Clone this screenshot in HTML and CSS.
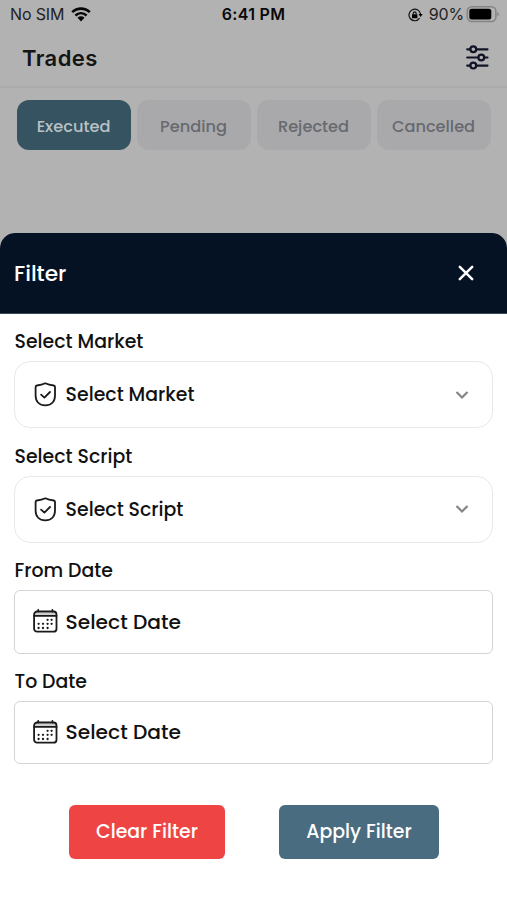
FILE: index.html
```html
<!DOCTYPE html>
<html lang="en">
<head>
<meta charset="utf-8">
<title>Trades</title>
<link rel="stylesheet" href="styles.css">
</head>
<body>
<svg width="0" height="0" class="defs">
  <symbol id="shield" viewBox="0 0 26 25"><path d="M13.3 1.3C10.8 2.5 7.6 3.2 4.9 3.5Q3.6 3.7 3.6 5V13.5C3.6 19.5 7.3 23.4 13.3 23.4S23 19.5 23 13.5V5Q23 3.7 21.7 3.5C19 3.2 15.8 2.5 13.3 1.3Z"/><path d="M9.1 12.6l3.3 3 5.6-5.6"/></symbol>
  <symbol id="chevron" viewBox="0 0 14 10"><path d="M1.5 2l5.5 5.5L12.5 2"/></symbol>
  <symbol id="calendar" viewBox="0 0 26 25"><path class="band" d="M2.5 3.4h22v3.2h-22z"/><rect x="2.1" y="2.5" width="22.4" height="20.2" rx="3"/><path d="M2.1 6.9h22.4M6.2 1v1.6M20.4 1v1.6"/><path class="dots" d="M15.6 10.8h.01M19.6 10.8h.01M6.6 14.8h.01M11 14.8h.01M15.6 14.8h.01M19.6 14.8h.01M6.6 19h.01M11 19h.01M15.6 19h.01"/></symbol>
</svg>
<main class="screen">
  <div class="status">
    <div class="carrier"><span>No SIM</span>
      <svg width="20" height="15" viewBox="0 0 20 15"><path class="arc" d="M1.2 5.1C6.2.4 13.8.4 18.8 5.1M4.4 8.5c3.3-3 7.9-3 11.2 0"/><path d="M6.5 10.7c2-1.8 5-1.8 7 0L10 14.4Z"/></svg>
    </div>
    <div class="time">6:41 PM</div>
    <div class="power">
      <svg class="lock" width="15" height="14" viewBox="0 0 15 14"><path class="ring" d="M11.6 10.2A5.8 5.8 0 1 1 12.5 6"/><path d="M10.5 6h4.2l-2.1 3zM4 6.2h5.4v4H4z"/><path class="ring" d="M5.3 6.3V5.2a1.4 1.4 0 0 1 2.8 0v1.1"/></svg>
      <span>90%</span>
      <svg width="33" height="17" viewBox="0 0 33 17"><rect class="case" x="1.3" y=".8" width="28.6" height="14.8" rx="4.5"/><rect x="3.3" y="2.8" width="22" height="10.8" rx="2.5"/><path class="tip" d="M31.4 6v4.4q1.5-.6 1.5-2.2T31.4 6Z"/></svg>
    </div>
  </div>
  <header class="topbar">
    <h1>Trades</h1>
    <svg class="sliders" width="23" height="25" viewBox="0 0 23 25"><path d="M1.2 4.3h2.9M10.5 4.3H21.5M1.2 12.5h10.5M18.5 12.5h3M1.2 20.6h2.9M10.5 20.6H21.5"/><circle cx="7.3" cy="4.3" r="2.9"/><circle cx="15.3" cy="12.5" r="2.9"/><circle cx="7.3" cy="20.6" r="2.9"/></svg>
  </header>
  <nav class="tabs">
    <span class="tab active">Executed</span><span class="tab">Pending</span><span class="tab">Rejected</span><span class="tab">Cancelled</span>
  </nav>
  <section class="sheet">
    <div class="sheet-head"><h2>Filter</h2>
      <svg class="close" width="16" height="16" viewBox="0 0 16 16"><path d="M1.8 1.8l12.4 12.4M14.2 1.8L1.8 14.2"/></svg>
    </div>
    <div class="form">
      <div class="field"><label>Select Market</label>
        <div class="box select"><svg class="icon"><use href="#shield"/></svg><span>Select Market</span><svg class="chevron"><use href="#chevron"/></svg></div></div>
      <div class="field"><label>Select Script</label>
        <div class="box select"><svg class="icon"><use href="#shield"/></svg><span>Select Script</span><svg class="chevron"><use href="#chevron"/></svg></div></div>
      <div class="field date"><label>From Date</label>
        <div class="box"><svg class="icon"><use href="#calendar"/></svg><span>Select Date</span></div></div>
      <div class="field date"><label>To Date</label>
        <div class="box"><svg class="icon"><use href="#calendar"/></svg><span>Select Date</span></div></div>
      <div class="actions"><button class="clear">Clear Filter</button><button class="apply">Apply Filter</button></div>
    </div>
  </section>
</main>
</body>
</html>
```
FILE: styles.css
```css
* { box-sizing: border-box; }
body { margin: 0; font-family: Poppins, Inter, "Liberation Sans", sans-serif; font-weight: 500; color: #111; }
h1, h2 { margin: 0; }
.defs { position: absolute; }
.screen { height: 900px; display: flex; flex-direction: column; background: #b2b2b3; overflow: hidden; }
.status { height: 30px; display: grid; grid-template-columns: 1fr auto 1fr; align-items: center; padding: 0 8px 1px 10px; font: 400 16px/29px Inter, sans-serif; color: #222; }
.carrier, .power { display: flex; align-items: center; }
.carrier { gap: 7px; letter-spacing: -.15px; }
.carrier svg { fill: #050505; }
.arc { fill: none; stroke: #050505; stroke-width: 2.6; }
.time { font-weight: 600; color: #080808; letter-spacing: .3px; margin-right: 2px; }
.power { justify-content: flex-end; }
.power .lock { margin-right: 6px; }
.power span { margin-right: 2px; letter-spacing: -.2px; }
.ring { fill: none; stroke: #111; stroke-width: 1.2; }
.case { fill: none; stroke: #858585; stroke-width: 1.5; }
.tip { fill: #858585; }
.topbar { height: 58px; border-bottom: 2px solid #aaaaab; display: flex; align-items: center; justify-content: space-between; padding: 0 18px 2px 22px; }
h1 { font: 600 22px/30px Inter, sans-serif; color: #151515; letter-spacing: .4px; padding-top: 2px; }
.sliders { fill: none; stroke: #111426; stroke-width: 2.2; stroke-linecap: round; }
.tabs { display: flex; gap: 6px; padding: 12px 16px 0 17px; height: 145px; }
.tab { flex: 1; height: 50px; border-radius: 12px; background: #a9a9ac; color: #67696f; font-size: 16.2px; line-height: 53px; text-align: center; text-indent: -1px; }
.tab.active { background: #355361; color: #b9c1c5; }
.sheet { flex: 1; background: #fff; border-radius: 15px 15px 0 0; overflow: hidden; }
.sheet-head { height: 81px; background: #051224; border-bottom: 1px solid #3b4858; display: flex; align-items: center; justify-content: space-between; padding: 0 33px 0 14px; }
h2 { font-size: 21.7px; line-height: 32px; font-weight: 500; color: #fff; padding-top: 1px; }
.close { fill: none; stroke: #fff; stroke-width: 2.5; stroke-linecap: round; }
.form { padding: 12px 14px 0; }
.field { height: 114.5px; font-size: 18.9px; }
.field.date { height: 110.7px; }
label { display: block; height: 35px; padding-left: .5px; line-height: 31px; }
.box { height: 63.5px; border: 1.5px solid #d4d4d4; border-radius: 6px; display: flex; align-items: center; padding: 0 23px 0 17px; font-size: 20.2px; }
.select { height: 67px; border-color: #e8e8e8; border-radius: 16px; font-size: 18.9px; }
.icon { width: 26px; height: 25px; margin-right: 7.6px; fill: none; stroke: #1a1a1a; stroke-width: 1.8; stroke-linecap: round; stroke-linejoin: round; }
.band { fill: #cfcfcf; stroke: none; }
.dots { stroke-width: 2.3; }
.chevron { width: 14px; height: 10px; margin-left: auto; fill: none; stroke: #858585; stroke-width: 2.2; }
.actions { display: flex; gap: 54px; padding: 28.2px 0 0 55px; }
button { height: 54px; width: 156px; border: 0; border-radius: 6px; background: #ef4444; color: #fff; font: inherit; font-size: 18.9px; padding: 0; }
.apply { width: 160px; background: #4a6c80; }
```
